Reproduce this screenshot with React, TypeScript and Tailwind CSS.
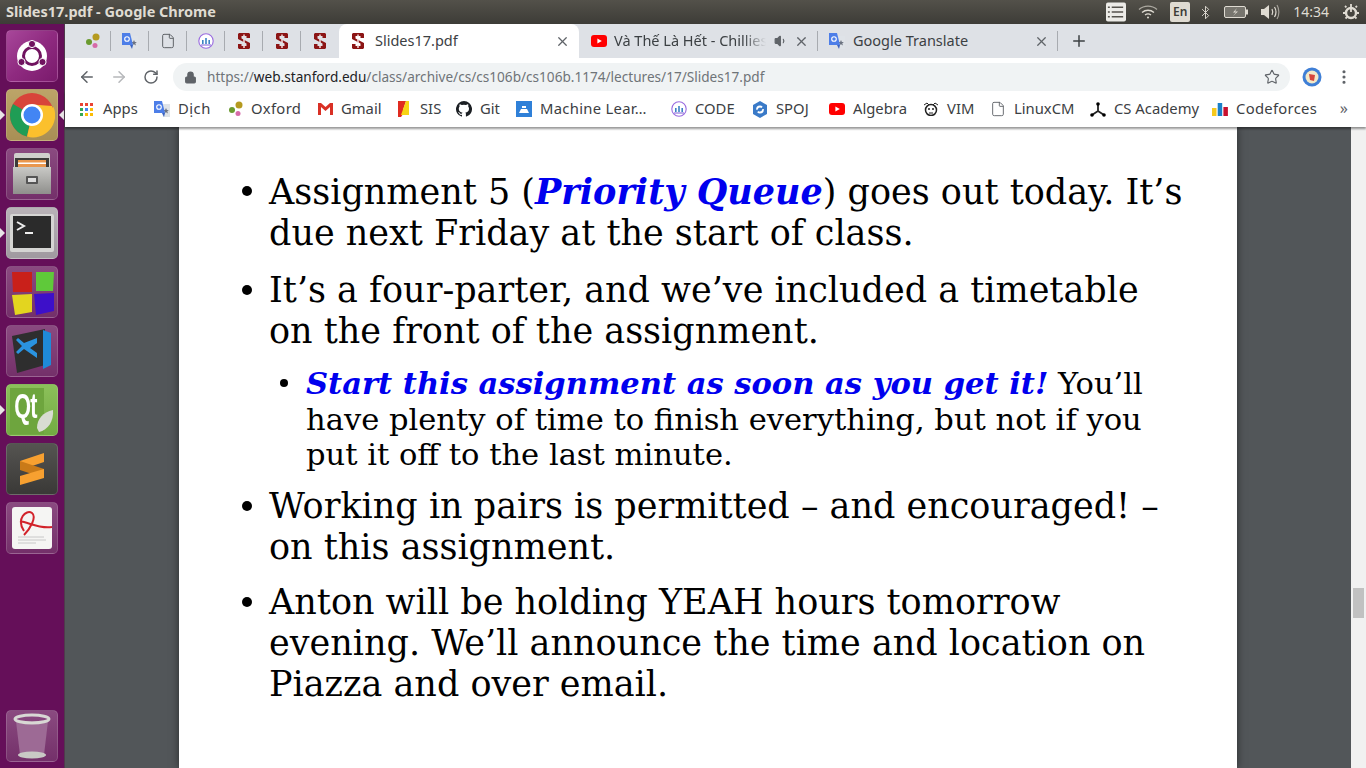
import { ArrowLeft, ArrowRight, Bluetooth, File, Lock, MoreVertical, Plus, RotateCw, Star, Volume1, X } from 'lucide-react'
import type { ReactNode } from 'react'

const ui = "font-['Noto_Sans',sans-serif]"

function Stanford() {
  return (
    <svg width="14" height="18" viewBox="0 0 14 18" className="shrink-0">
      <path d="M2 1h10l1 1v4H9.500V4h-5v2.500L13 11v5l-1 1H2l-1-1v-4h3.500v2h5v-2.500L1 7V2z" fill="#8c1515" />
      <path d="M7 2.500v2M7 7v4M7 13v3" stroke="#f3dcdc" strokeWidth="1.500" />
    </svg>
  )
}

function Oxford() {
  return (
    <svg width="16" height="16" viewBox="0 0 16 16" className="shrink-0">
      <circle cx="12" cy="4" r="3.500" fill="#b59a1f" />
      <circle cx="5" cy="9" r="3" fill="#6a9a2f" />
      <circle cx="11" cy="12.500" r="2.500" fill="#d66aa8" />
    </svg>
  )
}

function Translate({ size = 16 }: { size?: number }) {
  return (
    <svg width={size} height={size} viewBox="0 0 16 16" className="shrink-0">
      <path d="M7 3h9v13H9z" fill="#dfe3e8" />
      <path d="M12 7l.9 2h2l-1.600 1.300.6 2.200-1.900-1.300-1.900 1.300.6-2.200L9.100 9h2z" fill="#6b7280" />
      <path d="M0 0h8l3 12H0z" fill="#4d7ee8" />
      <circle cx="5" cy="6" r="2.300" fill="none" stroke="#fff" strokeWidth="1.100" />
      <path d="M10 16l-2-4h3z" fill="#3a62c0" />
    </svg>
  )
}

function Youtube() {
  return (
    <svg width="16" height="12" viewBox="0 0 16 12" className="shrink-0">
      <rect width="16" height="12" rx="3" fill="#f00" />
      <path d="M6.400 3.400l4.400 2.600-4.400 2.600z" fill="#fff" />
    </svg>
  )
}

function Uni({ size = 16 }: { size?: number }) {
  return (
    <svg width={size} height={size} viewBox="0 0 16 16" className="shrink-0">
      <circle cx="8" cy="8" r="7.200" fill="#fff" stroke="#9a6be0" strokeWidth="1.100" />
      <path d="M4 11V7h1.600v4zM7.200 11V5h1.600v6zM10.400 11V7H12v4z" fill="#3b82c4" />
      <path d="M3 12h10" stroke="#7c5cd6" />
    </svg>
  )
}

function Tile({ bg, children }: { bg: string; children: ReactNode }) {
  return (
    <div className={`relative flex h-[52px] w-[52px] items-center justify-center overflow-hidden rounded-[5px] border border-white/15 ${bg}`}>
      {children}
    </div>
  )
}

function Pip({ both }: { both?: boolean }) {
  return (
    <>
      <span className="absolute left-[-6px] top-[21px] h-0 w-0 border-y-[5px] border-l-[5px] border-y-transparent border-l-[#e8e4e6]" />
      {both && <span className="absolute left-[53px] top-[21px] h-0 w-0 border-y-[5px] border-r-[5px] border-y-transparent border-r-[#e8e4e6]" />}
    </>
  )
}

const plainTile = 'bg-gradient-to-b from-[#8a4a80] to-[#74306a]'

function Launcher() {
  return (
    <aside className="flex w-[65px] shrink-0 flex-col gap-[7px] border-r border-[#4f3a4c] bg-[#650f59] pb-[6px] pl-[6px] pt-[6px]">
      <Tile bg="bg-gradient-to-br from-[#a8479a] via-[#8f2a80] to-[#7a1a6c]">
        <svg width="40" height="40" viewBox="0 0 40 40">
          <circle cx="20" cy="20" r="15" fill="#fff" />
          <circle cx="20" cy="20" r="8.500" fill="none" stroke="#70135f" strokeWidth="3" />
          <circle cx="20" cy="8" r="3.600" fill="#70135f" stroke="#fff" />
          <circle cx="9.500" cy="26" r="3.600" fill="#70135f" stroke="#fff" />
          <circle cx="30.500" cy="26" r="3.600" fill="#70135f" stroke="#fff" />
        </svg>
      </Tile>
      <div className="relative">
        <Pip both />
        <Tile bg="bg-gradient-to-b from-[#bca468] to-[#a88f55]">
          <svg width="46" height="46" viewBox="0 0 46 46">
            <circle cx="23" cy="23" r="22" fill="#d8443a" />
            <path d="M23 23L4 12A22 22 0 0 0 18 44.500z" fill="#1f9d55" />
            <path d="M23 23L18 44.500A22 22 0 0 0 44.500 15z" fill="#fbc02d" />
            <path d="M23 12.500L43 14 44.500 23H23z" fill="#fbc02d" />
            <circle cx="23" cy="23" r="11" fill="#fff" />
            <circle cx="23" cy="23" r="8.500" fill="#4285f4" />
          </svg>
        </Tile>
      </div>
      <Tile bg={plainTile}>
        <svg width="42" height="44" viewBox="0 0 42 44">
          <defs>
            <linearGradient id="cab" x1="0" y1="0" x2="0" y2="1">
              <stop offset="0" stopColor="#c9c9c6" />
              <stop offset="1" stopColor="#8f8f8c" />
            </linearGradient>
          </defs>
          <rect x="3" y="1" width="36" height="40" rx="2" fill="#cfcfcc" />
          <rect x="4" y="6" width="34" height="11" fill="#3c3b39" />
          <rect x="7" y="8" width="28" height="9" fill="#e9974e" />
          <rect x="7" y="10.500" width="28" height="1.500" fill="#fff" />
          <rect x="2" y="15" width="38" height="27" fill="url(#cab)" />
          <rect x="15" y="24" width="12" height="8" rx="1" fill="#555" />
          <rect x="17" y="26" width="8" height="4" fill="#ddd" />
        </svg>
      </Tile>
      <div className="relative">
        <Pip />
        <Tile bg="bg-gradient-to-b from-[#b9b3b8] to-[#a09aa0]">
          <svg width="44" height="38" viewBox="0 0 44 38">
            <rect width="44" height="38" rx="2" fill="#d5d5d3" />
            <rect x="3" y="2" width="38" height="32" fill="#2b2b2b" />
            <path d="M7 8l7 4-7 4" fill="none" stroke="#eee" strokeWidth="2" />
            <path d="M15 19h8" stroke="#eee" strokeWidth="2" />
          </svg>
        </Tile>
      </div>
      <Tile bg={plainTile}>
        <svg width="46" height="46" viewBox="0 0 46 46">
          <path d="M3 3h20v20H4z" fill="#c9201a" />
          <path d="M27 3h18l-1 19H27z" fill="#5fc93a" />
          <path d="M3 26l20-1v18L6 46z" fill="#e3d51f" />
          <path d="M25 25l20-1v18l-18 4z" fill="#3d10c9" />
        </svg>
      </Tile>
      <Tile bg={plainTile}>
        <svg width="42" height="44" viewBox="0 0 42 44">
          <path d="M1 7L34 0v36L6 44z" fill="#2e2e2e" />
          <path d="M32 1l8 3v32l-8 4z" fill="#1f8ad8" />
          <path d="M26 9v20L13 20l-6 5-2-2 6-6-6-6 2-2 6 5zM26 14l-7 5 7 5z" fill="#2a93e0" fillRule="evenodd" />
        </svg>
      </Tile>
      <div className="relative">
        <Pip />
        <Tile bg="bg-gradient-to-b from-[#8cc05a] to-[#72ab42]">
          <div className="absolute left-[3px] top-[3px] h-[46px] w-[34px] bg-[#6ea53e]" />
          <span className="relative mr-[14px] mt-[-8px] scale-x-[0.900] scale-y-[1.450] font-['Liberation_Sans',sans-serif] text-[24px] font-bold leading-none tracking-[-1px] text-white">Qt</span>
          <svg width="20" height="24" viewBox="0 0 20 24" className="absolute bottom-[2px] right-[2px]">
            <path d="M18 1C8 3 2 10 2 19l2 4C13 21 19 12 18 1z" fill="#d8dcd2" />
          </svg>
        </Tile>
      </div>
      <Tile bg="bg-gradient-to-b from-[#555451] to-[#3a3937]">
        <svg width="24" height="32" viewBox="0 0 24 32">
          <path d="M24 0v9L0 17V8z" fill="#f7a030" />
          <path d="M0 8l24 8v9L0 17z" fill="#c97a18" />
          <path d="M24 16v9L0 32v-9z" fill="#f7a030" />
        </svg>
      </Tile>
      <Tile bg={plainTile}>
        <svg width="40" height="42" viewBox="0 0 40 42">
          <rect width="40" height="42" rx="3" fill="#f5f5f3" />
          <path d="M12 24C4 12 14 2 20 6c5 4-2 16-8 22M8 14c10 2 20 8 32 6" fill="none" stroke="#d2232a" strokeWidth="2" />
          <path d="M6 30h26M6 33h28M6 36h18" stroke="#c8c8c8" />
        </svg>
      </Tile>
      <div className="mt-auto">
        <Tile bg={plainTile}>
          <svg width="38" height="46" viewBox="0 0 38 46">
            <path d="M3 8l4 34h24l4-34z" fill="#9d6a95" />
            <ellipse cx="19" cy="42" rx="14" ry="3.500" fill="#c9c9c5" />
            <ellipse cx="19" cy="6" rx="17" ry="4" fill="none" stroke="#d8d8d4" strokeWidth="3" />
          </svg>
        </Tile>
      </div>
    </aside>
  )
}

function TopBar() {
  return (
    <header className={`flex h-[24px] items-center justify-between bg-gradient-to-b from-[#53514a] to-[#3d3c37] pl-[6px] pr-[6px] ${ui}`}>
      <span className="pb-[2px] text-[14.500px] font-bold leading-none text-[#dfdbd2]">Slides17.pdf - Google Chrome</span>
      <div className="flex items-center text-[#dfdbd2]">
        <svg width="20" height="20" viewBox="0 0 21 20" className="mr-[12px]">
          <rect width="21" height="20" rx="2" fill="#ecebe7" />
          <path d="M6 5h12M6 10h12M6 15h12" stroke="#55534d" strokeWidth="1.600" />
          <path d="M2 5h2M2 10h2M2 15h2" stroke="#55534d" strokeWidth="1.600" />
        </svg>
        <svg width="20" height="14" viewBox="0 0 20 14" fill="none" stroke="#dfdbd2" strokeWidth="1.300" className="mr-[12px]">
          <path d="M1 4.500c5-4.500 13-4.500 18 0" opacity="0.650" />
          <path d="M4 7.500c3.500-3 8.500-3 12 0" />
          <path d="M7 10c2-1.500 4-1.500 6 0" />
          <circle cx="10" cy="12.500" r="1" fill="#dfdbd2" stroke="none" />
        </svg>
        <span className="mr-[8px] flex h-[20px] w-[20px] items-center justify-center rounded-[2px] bg-[#dfdbd2] text-[12px] font-semibold text-[#3d3c37]">En</span>
        <Bluetooth size={15} strokeWidth={1.500} className="mr-[11px]" />
        <svg width="24" height="12" viewBox="0 0 24 12" className="mr-[12px]">
          <rect x="0.500" y="0.500" width="21" height="11" rx="1.500" fill="#77756e" stroke="#dfdbd2" />
          <rect x="22" y="3.500" width="2" height="5" fill="#dfdbd2" />
          <path d="M13 2L9 6.500h3L9 10l5-4.500h-3z" fill="#dfdbd2" />
        </svg>
        <svg width="20" height="16" viewBox="0 0 20 16" fill="none" stroke="#dfdbd2" strokeWidth="1.200" className="mr-[13px]">
          <path d="M1 5h3l5-4v14l-5-4H1z" fill="#dfdbd2" stroke="none" />
          <path d="M12 5c1 2 1 4 0 6M14.500 3c1.800 3 1.800 7 0 10" />
          <path d="M17 1c2.500 4 2.500 10 0 14" opacity="0.600" />
        </svg>
        <span className="mr-[13px] text-[14px] leading-none">14:34</span>
        <svg width="18" height="18" viewBox="0 0 18 18" fill="none" stroke="#dfdbd2" strokeWidth="2.400">
          <circle cx="9" cy="10" r="5" />
          <path d="M9 1v8M3 3l1.400 1.400M15 3l-1.400 1.400M1 10h2M15 10h2M3.500 15.500l1.400-1.400M14.500 15.500l-1.400-1.400" strokeWidth="1.800" />
        </svg>
      </div>
    </header>
  )
}

function PinnedTab({ children }: { children: ReactNode }) {
  return (
    <div className="flex h-full w-[38px] items-center">
      <div className="flex h-[20px] w-[38px] items-center justify-center border-r border-[#a8abb0]">{children}</div>
    </div>
  )
}

function TabStrip() {
  return (
    <div className={`flex h-[34px] items-stretch bg-[#dee1e6] pl-[8px] text-[14.500px] text-[#3c4043] ${ui}`}>
      <PinnedTab><Oxford /></PinnedTab>
      <PinnedTab><Translate /></PinnedTab>
      <PinnedTab><File size={16} strokeWidth={1.500} className="text-[#5f6368]" /></PinnedTab>
      <PinnedTab><Uni /></PinnedTab>
      <PinnedTab><Stanford /></PinnedTab>
      <PinnedTab><Stanford /></PinnedTab>
      <div className="flex h-full w-[38px] items-center justify-center"><Stanford /></div>
      <div className="flex w-[240px] items-center rounded-t-[8px] bg-white pl-[12px] pr-[9px]">
        <Stanford />
        <span className="ml-[10px] flex-1">Slides17.pdf</span>
        <X size={15} strokeWidth={2} className="text-[#5f6368]" />
      </div>
      <div className="flex w-[239px] items-center pl-[12px]">
        <Youtube />
        <span className="ml-[7px] w-[153px] overflow-hidden whitespace-nowrap [mask-image:linear-gradient(to_right,black_85%,transparent)]">Và Thế Là Hết - Chillies</span>
        <Volume1 size={14} className="ml-[8px] fill-[#5f6368] text-[#5f6368]" />
        <X size={15} strokeWidth={2} className="ml-[6px] text-[#5f6368]" />
        <div className="ml-[8px] h-[20px] border-r border-[#a8abb0]" />
      </div>
      <div className="flex w-[240px] items-center pl-[11px]">
        <Translate />
        <span className="ml-[8px] flex-1">Google Translate</span>
        <X size={15} strokeWidth={2} className="text-[#5f6368]" />
        <div className="ml-[8px] h-[20px] border-r border-[#a8abb0]" />
      </div>
      <div className="ml-[12px] flex items-center">
        <Plus size={18} strokeWidth={2} className="text-[#3c4043]" />
      </div>
    </div>
  )
}

function Toolbar() {
  return (
    <div className={`flex h-[33px] items-start bg-white pt-[5px] ${ui}`}>
      <div className="ml-[13px] flex h-[28px] items-center">
        <ArrowLeft size={18} strokeWidth={2} className="text-[#5f6368]" />
        <ArrowRight size={18} strokeWidth={2} className="ml-[14px] text-[#b6b8bb]" />
        <RotateCw size={16} strokeWidth={2.200} className="ml-[15px] text-[#5f6368]" />
      </div>
      <div className="ml-[14px] flex h-[28px] w-[1117px] items-center rounded-full bg-[#f0f3f4] pl-[11px] pr-[10px] text-[13.600px]">
        <Lock size={13} className="fill-[#5f6368] text-[#5f6368]" />
        <span className="ml-[10px] flex-1 whitespace-nowrap text-[#6f7478]">
          https://<span className="text-[#202124]">web.stanford.edu</span>/class/archive/cs/cs106b/cs106b.1174/lectures/17/Slides17.pdf
        </span>
        <Star size={16} strokeWidth={1.700} className="text-[#5f6368]" />
      </div>
      <div className="flex h-[28px] items-center">
        <svg width="20" height="20" viewBox="0 0 20 20" className="ml-[12px]">
          <circle cx="10" cy="10" r="9.500" fill="#3f7fd6" />
          <circle cx="10" cy="10" r="6.500" fill="#f3e9c8" />
          <path d="M7 7l6 1-1 6-4-1z" fill="#d6463c" />
        </svg>
        <MoreVertical size={18} strokeWidth={2.200} className="ml-[13px] text-[#5f6368]" />
      </div>
    </div>
  )
}

function Bookmark({ icon, label, ml, w }: { icon: ReactNode; label: string; ml: string; w: string }) {
  return (
    <div className={`flex shrink-0 items-center whitespace-nowrap ${ml}`}>
      <span className="flex w-[16px] items-center justify-center">{icon}</span>
      <span className={`ml-[8px] pb-[2px] ${w}`}>{label}</span>
    </div>
  )
}

function BookmarkBar() {
  const apps = ['bg-[#ea4335]', 'bg-[#ea4335]', 'bg-[#ea4335]', 'bg-[#34a853]', 'bg-[#4285f4]', 'bg-[#fbbc05]', 'bg-[#34a853]', 'bg-[#fbbc05]', 'bg-[#fbbc05]']
  return (
    <div className={`relative z-10 flex h-[36px] items-center bg-white pl-[15px] text-[14.800px] text-[#3c4043] shadow-[0_2px_2px_rgba(0,0,0,0.4)] ${ui}`}>
      <div className="flex shrink-0 items-center">
        <div className="grid w-[13px] grid-cols-3 gap-[2px]">
          {apps.map((c, i) => <span key={i} className={`h-[3px] w-[3px] ${c}`} />)}
        </div>
        <span className="ml-[10px] w-[35px] pb-[2px]">Apps</span>
      </div>
      <Bookmark ml="ml-[16px]" w="w-[33px] tracking-[0.5px]" icon={<Translate />} label="Dịch" />
      <Bookmark ml="ml-[16px]" w="w-[50px] tracking-[0.3px]" icon={<Oxford />} label="Oxford" />
      <Bookmark ml="ml-[16px]" w="w-[39px]" icon={
        <svg width="15" height="12" viewBox="0 0 15 12"><path d="M0 0h3l4.500 4L12 0h3v12h-3V4L7.500 8 3 4v8H0z" fill="#d93025" /></svg>
      } label="Gmail" />
      <Bookmark ml="ml-[16px]" w="w-[20px]" icon={
        <svg width="14" height="16" viewBox="0 0 14 16"><path d="M1 0h8L6 9h3l-5 7H1z" fill="#e02b20" /><path d="M9 0h3v14H4z" fill="#f7d414" /></svg>
      } label="SIS" />
      <Bookmark ml="ml-[16px]" w="w-[20px]" icon={
        <svg width="16" height="16" viewBox="0 0 16 16"><path d="M8 0a8 8 0 0 0-2.500 15.600c.4.100.5-.2.5-.4v-1.400c-2.200.5-2.700-1-2.700-1-.4-.9-.9-1.200-.9-1.200-.7-.5.100-.5.100-.5.800.1 1.200.8 1.200.8.700 1.200 1.900.9 2.300.7.100-.5.300-.9.500-1.100-1.800-.2-3.700-.9-3.700-4 0-.9.300-1.600.8-2.100-.1-.2-.4-1 .1-2.100 0 0 .7-.2 2.200.8a7.600 7.600 0 0 1 4 0c1.500-1 2.200-.8 2.200-.8.400 1.100.2 1.900.1 2.100.5.600.8 1.300.8 2.100 0 3.100-1.900 3.800-3.700 4 .3.300.6.800.6 1.500v2.200c0 .2.100.5.600.4A8 8 0 0 0 8 0z" fill="#1b1f23" /></svg>
      } label="Git" />
      <Bookmark ml="ml-[16px]" w="w-[107px] tracking-[0.3px]" icon={
        <svg width="16" height="16" viewBox="0 0 16 16"><rect width="16" height="16" fill="#2f80d8" /><path d="M3 12l2-4h6l2 4zM6 7h4V5H6z" fill="#fff" /></svg>
      } label="Machine Lear…" />
      <Bookmark ml="ml-[24px]" w="w-[40px]" icon={<Uni />} label="CODE" />
      <Bookmark ml="ml-[17px]" w="w-[36px]" icon={
        <svg width="16" height="17" viewBox="0 0 16 17"><path d="M8 0l7 4v9l-7 4-7-4V4z" fill="#3a7ac8" /><circle cx="8" cy="8.500" r="3" fill="none" stroke="#fff" strokeWidth="1.800" strokeDasharray="7 2" /></svg>
      } label="SPOJ" />
      <Bookmark ml="ml-[17px]" w="w-[54px]" icon={<Youtube />} label="Algebra" />
      <Bookmark ml="ml-[16px]" w="w-[27px]" icon={
        <svg width="16" height="14" viewBox="0 0 16 14"><circle cx="8" cy="8" r="5.500" fill="#fff" stroke="#222" strokeWidth="1.500" /><circle cx="6" cy="7" r="1" fill="#222" /><circle cx="10" cy="7" r="1" fill="#222" /><path d="M1 3l3-2 2 2M15 3l-3-2-2 2M6 11h4" stroke="#222" fill="none" /></svg>
      } label="VIM" />
      <Bookmark ml="ml-[16px]" w="w-[60px]" icon={<File size={16} strokeWidth={1.400} className="text-[#5f6368]" />} label="LinuxCM" />
      <Bookmark ml="ml-[16px]" w="w-[83px]" icon={
        <svg width="16" height="15" viewBox="0 0 16 15"><path d="M8 2v7M8 9l-6 4M8 9l6 4" stroke="#222" strokeWidth="1.800" /><circle cx="8" cy="2" r="1.800" /><circle cx="2" cy="13" r="1.800" /><circle cx="14" cy="13" r="1.800" /></svg>
      } label="CS Academy" />
      <Bookmark ml="ml-[15px]" w="w-[78px] tracking-[0.3px]" icon={
        <svg width="16" height="14" viewBox="0 0 16 14"><rect y="6" width="4.500" height="8" fill="#f6c91c" /><rect x="5.700" y="1" width="4.500" height="13" fill="#1a80c8" /><rect x="11.400" y="5" width="4.500" height="9" fill="#c8102e" /></svg>
      } label="Codeforces" />
      <span className="absolute right-[18px] top-[7px] text-[16px] leading-[20px] text-[#5f6368]">»</span>
    </div>
  )
}

function MainBullet({ children }: { children: ReactNode }) {
  return (
    <li className="relative pl-[90px] text-[35px] leading-[41px] text-black">
      <span className="absolute left-[63px] top-[15px] h-[10px] w-[10px] rounded-full bg-black" />
      {children}
    </li>
  )
}

function Line({ children }: { children: ReactNode }) {
  return <span className="block whitespace-nowrap">{children}</span>
}

function Em({ children }: { children: ReactNode }) {
  return <em className="font-bold italic text-[#0000ee]">{children}</em>
}

function PdfPage() {
  return (
    <div className="relative flex min-h-0 flex-1 overflow-hidden bg-[#525659]">
      <div className="ml-[114px] w-[1058px] shrink-0 self-stretch bg-white pt-[44px] font-['DejaVu_Serif',serif] shadow-[0_0_8px_rgba(0,0,0,0.5)]">
        <ul>
          <MainBullet>
            <Line>Assignment 5 (<Em>Priority Queue</Em>) goes out today. It’s</Line>
            <Line>due next Friday at the start of class.</Line>
          </MainBullet>
          <div className="mt-[16px]">
            <MainBullet>
              <Line>It’s a four-parter, and we’ve included a timetable</Line>
              <Line>on the front of the assignment.</Line>
            </MainBullet>
          </div>
          <li className="relative mt-[14px] pl-[127px] text-[30.550px] leading-[35.500px] text-black">
            <span className="absolute left-[101px] top-[13px] h-[8px] w-[8px] rounded-full bg-black" />
            <Line><Em>Start this assignment as soon as you get it!</Em> You’ll</Line>
            <Line>have plenty of time to finish everything, but not if you</Line>
            <Line>put it off to the last minute.</Line>
          </li>
          <div className="mt-[13px]">
            <MainBullet>
              <Line>Working in pairs is permitted – and encouraged! –</Line>
              <Line>on this assignment.</Line>
            </MainBullet>
          </div>
          <div className="mt-[14.500px]">
            <MainBullet>
              <Line>Anton will be holding YEAH hours tomorrow</Line>
              <Line>evening. We’ll announce the time and location on</Line>
              <Line>Piazza and over email.</Line>
            </MainBullet>
          </div>
        </ul>
      </div>
      <div className="ml-auto flex w-[15px] shrink-0 justify-center bg-[#f1f1f1]">
        <div className="mt-[461px] h-[30px] w-[11px] bg-[#c1c1c1]" />
      </div>
    </div>
  )
}

export default function App() {
  return (
    <div className="flex h-[768px] w-[1366px] flex-col overflow-hidden">
      <TopBar />
      <div className="flex min-h-0 flex-1">
        <Launcher />
        <div className="flex min-w-0 flex-1 flex-col">
          <TabStrip />
          <Toolbar />
          <BookmarkBar />
          <PdfPage />
        </div>
      </div>
    </div>
  )
}
